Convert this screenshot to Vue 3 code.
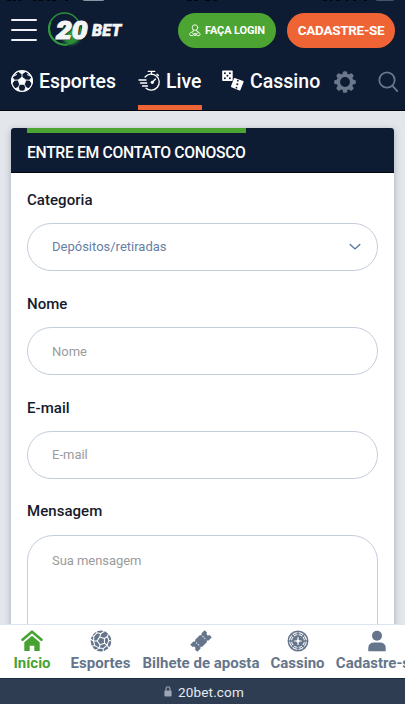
<script setup>
import { ref } from 'vue'

const category = ref('Depósitos/retiradas')
const fields = [
  { label: 'Nome', type: 'text' },
  { label: 'E-mail', type: 'email' },
]
</script>

<template>
  <div class="screen">
    <header class="header">
      <svg class="status" viewBox="0 0 405 4" aria-hidden="true">
        <path d="M7 0h4M13 0h3M18 0h3M33 0h3M38 0h5M47 0h3M52 0h4M65 0h3M187 0h5M194 0h4M205 0h5M213 0h4M323 0h4M330 0h2M336 0h4M346 0h2M353 0h3M364 0h3" stroke="#02050b" stroke-width="1.8" />
        <rect x="82" y="-8" width="23" height="9" rx="3" fill="#8995a1" />
        <rect x="375" y="-8" width="20" height="9" rx="3" fill="#46536a" />
      </svg>
      <div class="top">
        <div class="burger"><i></i><i></i><i></i></div>
        <div class="logo">
          <svg class="ring" viewBox="0 0 38 38" aria-hidden="true">
            <defs>
              <radialGradient id="glow"><stop offset="0" stop-color="#36a23b" /><stop offset=".6" stop-color="#2a8a38" /><stop offset="1" stop-color="#0d1b33" stop-opacity="0" /></radialGradient>
            </defs>
            <ellipse cx="24" cy="24" rx="13" ry="13" fill="url(#glow)" />
            <circle cx="17.500" cy="17.900" r="15.800" fill="none" stroke="#2e8e3b" stroke-width="1.500" />
            <path d="M3.500 11.500A16 16 0 0 0 20.500 33.500" fill="none" stroke="#2f983b" stroke-width="1.900" />
          </svg>
          <span class="twenty">20</span><span class="bet">BET</span>
        </div>
        <button class="btn login">
          <svg viewBox="0 0 12 13" aria-hidden="true">
            <g fill="none" stroke="#eaf8e5" stroke-width="1" stroke-linecap="round" stroke-linejoin="round">
              <circle cx="6" cy="3.600" r="2.800" />
              <path d="M4.300 6.200v1.200L1.600 8.600Q.5 9.200.7 10.800q.1.800 1.200.8h2M7.700 6.200v1.100l2 .9M3.300 8.800l1.500 1.800" />
              <circle cx="6" cy="10.400" r="1.200" /><path d="M7.200 10.200 8.400 9q2.100-.8 2.700.7.500 1.500-1 1.900H8" />
            </g>
          </svg>
          <span>FAÇA LOGIN</span>
        </button>
        <button class="btn signup"><span>CADASTRE-SE</span></button>
      </div>
      <nav class="sections">
        <a class="s1">
          <svg width="24" height="24" viewBox="0 0 24 24" aria-hidden="true">
            <circle cx="12" cy="12" r="10.400" fill="none" stroke="#fff" stroke-width="1.200" />
            <g fill="#fff" stroke="#fff" stroke-width=".9" stroke-linejoin="round">
              <path d="m12 8.200 3.800 2.800-1.400 4.300H9.600L8.200 11z" />
              <path d="M8.300 2.400h7.400L12 4.900zM21.700 8.500l.5 6-2.700-3.300zM18.900 19.800l-4.200 2.200.9-3.700zM5.100 19.800l4.200 2.200-.9-3.700zM2.300 8.500l-.5 6 2.700-3.300z" />
              <path d="M12 4.900v3.300M15.800 11l3.700.2M14.400 15.300l1.200 3M9.600 15.300l-1.200 3M8.200 11l-3.700.2M3.200 7.400l2-2.600 1.500.8zM20.800 7.400l-2-2.600-1.500.8z" fill="none" />
            </g>
          </svg>
          <span>Esportes</span>
        </a>
        <a class="s2 active">
          <svg width="24" height="24" viewBox="0 0 24 24" aria-hidden="true">
            <g fill="none" stroke="#fff" stroke-width="1.350" stroke-linecap="round">
              <path d="M10.200 2.300h6.600M13.500 2.500v2.700M19 5.200l1.400 1.400M7.100 8A8 8 0 1 1 8.100 19.300M1 11h7M2.500 14h6.200M4.500 17h5" />
              <path d="m15 12.600 2.500-2.500" />
            </g>
            <circle cx="14.300" cy="13.300" r="1.600" fill="#fff" />
          </svg>
          <span>Live</span>
        </a>
        <a class="s3">
          <svg width="24" height="24" viewBox="0 0 24 24" aria-hidden="true">
            <rect x="1.200" y="1.500" width="10.500" height="10.500" rx=".8" fill="#fff" />
            <path d="M13.700 8.900 22.200 12q.7.300.4 1l-3.200 8q-.3.700-1 .4l-7.900-3.200q-.8-.3-.5-1l2.900-7.700q.2-.7.800-.6z" fill="#fff" />
            <g fill="#0d1b33"><circle cx="3.900" cy="4.200" r="1" /><circle cx="8.900" cy="4.200" r="1" /><circle cx="6.400" cy="6.700" r="1" /><circle cx="3.900" cy="9.300" r="1" /><circle cx="8.900" cy="9.300" r="1" /><circle cx="16.800" cy="11.700" r=".9" /><circle cx="16.300" cy="15.300" r="1.050" /><circle cx="15.500" cy="18.700" r=".9" /></g>
          </svg>
          <span>Cassino</span>
        </a>
        <svg class="gear" viewBox="0 0 22 22" aria-hidden="true">
          <g fill="#6b788c"><rect v-for="n in 4" :key="n" x="8.700" y=".2" width="4.600" height="21.600" rx="1.600" :transform="`rotate(${n * 45} 11 11)`" /><circle cx="11" cy="11" r="8.400" /></g>
          <circle cx="11" cy="11" r="4.900" fill="#0d1b33" />
        </svg>
        <svg class="search" viewBox="0 0 21 22" aria-hidden="true"><g fill="none" stroke="#69788b" stroke-width="1.800" stroke-linecap="round"><circle cx="9" cy="9" r="7.700" /><path d="m14.500 14.800 4.800 5.300" /></g></svg>
      </nav>
    </header>

    <main class="content">
      <form class="card" @submit.prevent>
        <h1><span>ENTRE EM CONTATO CONOSCO</span></h1>
        <div class="body">
          <label>Categoria</label>
          <div class="control select">
            <span>{{ category }}</span>
            <svg width="12" height="8" viewBox="0 0 12 8" aria-hidden="true"><path d="m1.200 1.400 4.800 4.500 4.800-4.500" fill="none" stroke="#55779d" stroke-width="1.400" stroke-linecap="round" /></svg>
          </div>
          <template v-for="f in fields" :key="f.label">
            <label>{{ f.label }}</label>
            <input class="control" :type="f.type" :placeholder="f.label" />
          </template>
          <label>Mensagem</label>
          <textarea class="control message" placeholder="Sua mensagem"></textarea>
        </div>
      </form>
    </main>

    <nav class="tabs">
      <a class="t1 home">
        <svg viewBox="0 0 22 22" aria-hidden="true"><path d="m1.500 9.700 9.500-8 9.500 8" fill="none" stroke="#47a331" stroke-width="2.600" stroke-linecap="round" stroke-linejoin="round" /><path d="m11 5.800 7.700 6.400V20.500q0 .6-.6.600h-4.800v-5.400H8.700v5.400H3.900q-.6 0-.6-.6v-8.300z" fill="#47a331" /></svg>
        <span>Início</span>
      </a>
      <a class="t2">
        <svg viewBox="0 0 22 22" aria-hidden="true">
          <circle cx="11" cy="11" r="10.400" fill="#65758b" />
          <g fill="none" stroke="#fff" stroke-width="1.050" stroke-linejoin="round"><path d="m9.800 6.900 4.600 1.600.1 4.700-4.500 1.500-2.900-3.800zM9.800 6.900 10.800 3.500M14.400 8.500l3-2M14.500 13.200l2.800 2M10 14.700l-.7 3.400M7.100 10.900l-3.600.1M6.300.8 7 2.800l3.800.7 3.700-2.300M18.700 2.900l-1.300 3.600 1.400 3.700 3 1M18.800 10.200l-1.500 5 1.700 3.200M17.300 15.200l-4.100 3.400.2 3M13.200 18.600l-3.900-.5-3.300 2M9.300 18.100l-4.500-2.500-3 .6M4.800 15.600 3.500 11 .6 9.300M3.500 11l.4-5 3.100-3.200M3.900 6 1.700 6" /></g>
        </svg>
        <span>Esportes</span>
      </a>
      <a class="t3">
        <svg viewBox="0 0 22 22" aria-hidden="true"><g transform="rotate(-45 11 11)"><path d="M.8 6h4.400l1.300 1.300L7.800 6h6.400l1.300 1.300L16.800 6h4.400v3.300q-1.600.3-1.600 1.700t1.600 1.700V16h-4.400l-1.300-1.300-1.300 1.300H7.800l-1.300-1.300L5.200 16H.8v-3.300Q2.400 12.400 2.400 11T.8 9.300z" fill="#65758b" /><path d="M6.500 8.700v5M15.500 8.700v5" stroke="#fff" stroke-width="1" stroke-dasharray="1.200 1.200" /></g></svg>
        <span>Bilhete de aposta</span>
      </a>
      <a class="t4">
        <svg viewBox="0 0 22 22" aria-hidden="true"><circle cx="11" cy="11" r="9.700" fill="none" stroke="#65758b" stroke-width="1.500" /><circle cx="11" cy="11" r="6" fill="#65758b" /><circle cx="11" cy="11" r="7.400" fill="none" stroke="#65758b" stroke-width="1" /><path d="M11 1.500v4M11 16.500v4M1.500 11h4M16.500 11h4M4.300 4.300l2.500 2.500M15.200 15.200l2.500 2.500M4.300 17.700l2.500-2.500M15.200 6.800l2.500-2.500" stroke="#65758b" stroke-width="1.300" /><path d="M11 7.600v6.800M7.600 11h6.800" stroke="#fff" stroke-width="1.200" stroke-linecap="round" /><circle cx="11" cy="11" r="1.600" fill="#fff" /></svg>
        <span>Cassino</span>
      </a>
      <a class="t5">
        <svg viewBox="0 0 22 22" aria-hidden="true"><circle cx="11" cy="5.700" r="5" fill="#65758b" /><path d="M2.300 21.300v-3.200q0-5.500 6.200-5.500h5q6.200 0 6.200 5.500v3.200z" fill="#65758b" /></svg>
        <span>Cadastre-se</span>
      </a>
    </nav>
    <footer class="address">
      <svg width="8" height="11" viewBox="0 0 8 11" aria-hidden="true"><path d="M2 5V3.100Q2 .7 4 .7t2 2.400V5" fill="none" stroke="#9ca5b3" stroke-width="1.100" /><rect x=".4" y="4.600" width="7.200" height="6" rx="1" fill="#9ca5b3" /></svg>
      <span>20bet.com</span>
    </footer>
  </div>
</template>

<style>
body { background: #e3e7ec; overflow: hidden; }
</style>

<style scoped>
* { box-sizing: border-box; }
.screen { width: 405px; height: 704px; display: flex; flex-direction: column; overflow: hidden; font-family: Roboto, "Liberation Sans", sans-serif; background: #e3e7ec; }
.header { height: 111px; flex: none; display: flex; flex-direction: column; background: #0d1b33; border-bottom: 1px solid #03070d; }
.status { width: 405px; height: 4px; flex: none; display: block; }
.top { height: 52px; flex: none; display: flex; align-items: center; padding-left: 11px; }
.burger { width: 26px; height: 23px; display: flex; flex-direction: column; justify-content: space-between; }
.burger i { height: 2.400px; border-radius: 1px; background: #f1eff7; }
.logo { width: 78px; height: 38px; margin-left: 10px; display: flex; align-items: center; position: relative; font-style: italic; font-weight: 900; color: #f4f5f7; white-space: nowrap; }
.ring { width: 38px; height: 38px; position: absolute; left: 0; top: 0; }
.twenty { position: relative; width: 35px; margin-left: 9px; font-size: 26px; line-height: 37px; transform: scaleX(1.08); transform-origin: left; text-shadow: 1px 1px 1px #062019; -webkit-text-stroke: 1.200px #f4f5f7; }
.bet { position: relative; margin-left: 1px; font-size: 16px; line-height: 38px; padding-top: 2px; letter-spacing: .3px; -webkit-text-stroke: .6px #f4f5f7; }
.btn { height: 35px; padding: 0; border: 0; border-radius: 18px; color: #fff; font: 700 12px/35px Roboto, sans-serif; display: flex; align-items: center; justify-content: center; white-space: nowrap; }
.login { width: 98px; margin-left: 53px; gap: 4px; background: #4ca532; }
.login svg { width: 12px; height: 13px; }
.login span { font-size: 11px; letter-spacing: -.15px; padding-top: 1px; }
.signup { width: 108px; margin-left: 11px; background: #ef6435; font-size: 13.500px; }
.signup span { letter-spacing: -.3px; padding-top: 1px; }
.sections { flex: 1; display: flex; padding-left: 10px; color: #fff; font-size: 20px; font-weight: 500; }
.sections a { height: 54px; display: flex; align-items: center; gap: 5px; padding-top: 1px; white-space: nowrap; flex: none; border-bottom: 5px solid transparent; }
.sections a svg { flex: none; }
.sections a span { line-height: 24px; padding-top: 1px; }
.s1 { width: 106px; font-size: 19.400px; }
.s2 { width: 64px; margin-left: 22px; }
.sections .s2 { gap: 4px; }
.s2 span { font-size: 19.400px; }
.sections .active { border-bottom-color: #ef6435; }
.sections .s3 { width: 101px; margin-left: 19px; font-size: 19.500px; }
.gear { width: 22px; height: 22px; margin: 15px 0 0 12px; flex: none; }
.search { width: 21px; height: 22px; margin: 15px 0 0 22px; flex: none; }
.content { flex: 1; min-height: 0; overflow: hidden; padding: 17px 11px 0; }
.card { height: 550px; background: #fff; border-radius: 3px 3px 0 0; box-shadow: 0 2px 7px rgba(41, 56, 78, .34); }
h1 { height: 45px; margin: 0; padding-left: 16px; display: flex; background: #0d1b33; border-bottom: 1px solid #03070d; border-radius: 3px 3px 0 0; color: #fff; font-size: 15.700px; letter-spacing: -.32px; font-weight: 500; }
h1 span { width: 219px; border-top: 5px solid #4ca532; line-height: 39px; white-space: nowrap; }
.body { padding: 11px 16px 0; display: flex; flex-direction: column; }
label { height: 33px; margin-bottom: 6.400px; color: #151a2b; font-size: 15px; font-weight: 500; line-height: 33px; letter-spacing: .05px; }
.control { display: block; width: 351px; height: 48px; flex: none; margin: 0 0 16.400px; padding: 0 24px; border: 1px solid #c5cddd; border-radius: 24px; outline: 0; background: #fff; font: 400 13px/20px Roboto, sans-serif; letter-spacing: 0; color: #6680a5; }
.select { display: flex; align-items: center; justify-content: space-between; padding-right: 16px; }
.control::placeholder { color: #9b9b9d; opacity: 1; }
.message { height: 170px; border-radius: 26px; padding-top: 15px; resize: none; overflow: hidden; letter-spacing: -.05px; }
.tabs { height: 54px; flex: none; display: flex; background: #fff; border-top: 1px solid #dce4ef; color: #65758b; overflow: hidden; position: relative; }
.tabs a { flex: none; display: flex; flex-direction: column; align-items: center; padding-top: 5px; white-space: nowrap; font-size: 15px; font-weight: 700; }
.tabs svg { width: 22px; height: 22px; }
.tabs span { line-height: 22px; }
.tabs .home { color: #47a331; }
.t1 { width: 64px; }
.t2 { width: 73px; }
.t3 { width: 128px; }
.t4 { width: 65px; }
.t5 { width: 94px; }
.address { height: 26px; flex: none; display: flex; align-items: center; justify-content: center; gap: 6px; padding-left: 3px; background: #2e3d52; border-top: 1px solid #1b293f; color: #e7eaf0; font-size: 13.500px; letter-spacing: .15px; }
</style>
